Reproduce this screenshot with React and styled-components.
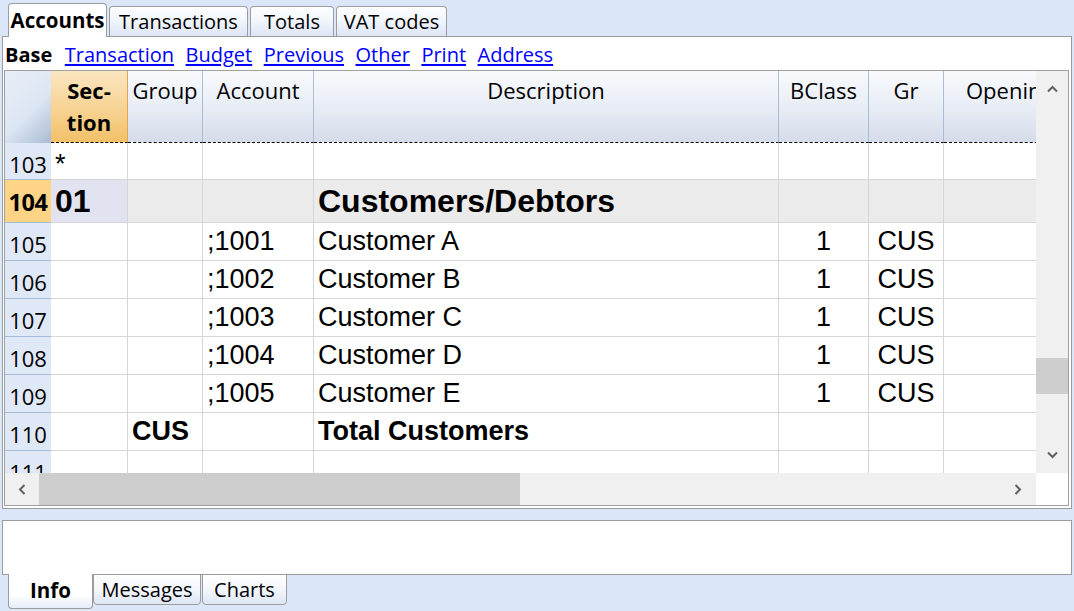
import React from 'react';
import styled, { createGlobalStyle, css } from 'styled-components';

const GlobalStyle = createGlobalStyle`
  html, body { margin: 0; padding: 0; background: #dbe6f8; }
  body { font-family: "Open Sans", "Noto Sans", sans-serif; width: 1074px; height: 611px; overflow: hidden; color: #000; }
  * { box-sizing: border-box; }
`;

const COLS = '46px 77px 75px 111px 465px 90px 75px 124px';
const BORDER = '#9c9c9c';

const Page = styled.div`
  display: flex;
  flex-direction: column;
  width: 1074px;
  height: 611px;
  background: #dbe6f8;
`;

const TopTabs = styled.div`
  display: flex;
  align-items: flex-end;
  gap: 2px;
  height: 36px;
  padding-left: 8px;
  position: relative;
  z-index: 2;
`;

const TopTab = styled.div`
  width: ${p => p.$w}px;
  height: ${p => (p.$active ? 34 : 30)}px;
  margin-bottom: ${p => (p.$active ? -1 : 0)}px;
  border: 1px solid ${BORDER};
  border-bottom: none;
  border-radius: 4px 4px 0 0;
  background: ${p => (p.$active ? '#ffffff' : 'linear-gradient(#fdfeff, #f2f6fc 45%, #dce5f5)')};
  font-size: ${p => (p.$active ? 20.5 : 20)}px;
  line-height: 27px;
  font-weight: ${p => (p.$active ? 700 : 400)};
  display: flex;
  align-items: flex-end;
  justify-content: center;
  padding-bottom: ${p => (p.$active ? 3 : 1)}px;
  white-space: nowrap;
`;

const Panel = styled.div`
  margin: 0 2px;
  height: 473px;
  border: 1px solid ${BORDER};
  background: #fff;
  display: flex;
  flex-direction: column;
  position: relative;
  z-index: 1;
`;

const SubTabs = styled.div`
  display: flex;
  gap: 11.5px;
  height: 33px;
  padding: 4px 0 0 2px;
  font-size: 20px;
  line-height: 27px;
`;

const SubTab = styled.span`
  ${p => p.$active
    ? css`font-weight: 700; color: #000; margin-right: 1px;`
    : css`color: #0000ff; text-decoration: underline; text-underline-offset: 2px;`}
`;

const GridFrame = styled.div`
  margin: 0 0 2px 1px;
  width: 1065px;
  border: 1px solid #a0a0a0;
  display: grid;
  grid-template-columns: 1031px 32px;
  grid-template-rows: 402px 32px;
`;

const Viewport = styled.div`
  overflow: hidden;
  display: flex;
  flex-direction: column;
`;

const HeaderRow = styled.div`
  display: grid;
  grid-template-columns: ${COLS};
  height: 72px;
  flex: none;
`;

const HeadCell = styled.div`
  border-right: 1px solid #a9bdd6;
  border-bottom: 1px dashed #000;
  background: linear-gradient(#f8fafd, #e8edf5 50%, #d5dce9);
  text-align: center;
  font-size: 22px;
  line-height: 32px;
  padding-top: 3px;
  white-space: nowrap;
  overflow: hidden;
  ${p => p.$section && css`
    background: linear-gradient(#fbe6c0, #f7d496 50%, #f2c168);
    border-right: 1px solid #e3a64e;
    font-weight: 700;
  `}
  ${p => p.$left && css`text-align: left; padding-left: 22px;`}
`;

const Corner = styled.div`
  background: linear-gradient(135deg, #e7eef8 0%, #dde6f3 55%, #a9bbd4 100%);
`;

const Row = styled.div`
  display: grid;
  grid-template-columns: ${COLS};
  height: ${p => p.$h}px;
  flex: none;
  background: ${p => (p.$band ? '#ebebeb' : '#fff')};
`;

const NumCell = styled.div`
  background: ${p => (p.$active ? '#fdd386' : '#dfe8f6')};
  border-bottom: 1px solid #a6bbd6;
  display: flex;
  align-items: center;
  justify-content: center;
  padding-top: ${p => (p.$active ? 1 : 5)}px;
  font-size: ${p => (p.$active ? 23.5 : 22)}px;
  font-weight: ${p => (p.$active ? 700 : 400)};
  letter-spacing: ${p => (p.$active ? '-0.5px' : '0')};
  overflow: hidden;
`;

const Cell = styled.div`
  border-right: 1px solid #d6d6d6;
  border-bottom: 1px solid #d6d6d6;
  display: flex;
  align-items: ${p => (p.$top ? 'flex-start' : 'center')};
  justify-content: ${p => (p.$center ? 'center' : 'flex-start')};
  padding: ${p => (p.$top ? '6px 4px 0' : '0 4px')};
  font-family: "Liberation Sans", Arial, sans-serif;
  font-size: ${p => (p.$big ? 32 : 27)}px;
  font-weight: ${p => (p.$bold ? 700 : 400)};
  white-space: nowrap;
  overflow: hidden;
  background: ${p => (p.$tint ? '#e1e4f0' : 'transparent')};
`;

const VScroll = styled.div`
  background: #f0f0f0;
  display: flex;
  flex-direction: column;
`;

const ScrollBtn = styled.div`
  flex: none;
  width: ${p => p.$w || 32}px;
  height: ${p => p.$h || 32}px;
  display: flex;
  align-items: center;
  justify-content: center;
`;

const VTrack = styled.div`
  flex: 1;
  padding-top: 251px;
`;

const VThumb = styled.div`
  height: 36px;
  background: #cdcdcd;
`;

const HScroll = styled.div`
  background: #f0f0f0;
  display: flex;
`;

const HThumb = styled.div`
  width: 481px;
  background: #cdcdcd;
`;

const HTrack = styled.div`
  flex: 1;
`;

const ScrollCorner = styled.div`
  background: #fff;
`;

const InfoPanel = styled.div`
  margin: 11px 2px 0;
  height: 55px;
  border: 1px solid ${BORDER};
  background: #fff;
`;

const BottomTabs = styled.div`
  display: flex;
  align-items: flex-start;
  padding-left: 8px;
  margin-top: -1px;
  position: relative;
  z-index: 2;
`;

const BottomTab = styled.div`
  width: ${p => p.$w}px;
  margin-left: ${p => p.$ml || 0}px;
  height: ${p => (p.$active ? 35 : 31)}px;
  border: 1px solid ${BORDER};
  border-top: ${p => (p.$active ? 'none' : `1px solid ${BORDER}`)};
  border-radius: 0 0 4px 4px;
  background: ${p => (p.$active ? 'linear-gradient(#ffffff, #ffffff 60%, #e6edf9)' : 'linear-gradient(#ffffff, #f3f6fc 50%, #dde6f5)')};
  font-size: ${p => (p.$active ? 20.5 : 20)}px;
  line-height: 27px;
  font-weight: ${p => (p.$active ? 700 : 400)};
  text-align: center;
  padding-top: ${p => (p.$active ? 3 : 1)}px;
`;

function Chevron({ dir }) {
  const pts = {
    up: '1,6.5 5.5,2 10,6.5',
    down: '1,1.5 5.5,6 10,1.5',
    left: '6.5,1 2,5.5 6.5,10',
    right: '1.5,1 6,5.5 1.5,10',
  }[dir];
  const vertical = dir === 'up' || dir === 'down';
  const w = vertical ? 11 : 8;
  const h = vertical ? 8 : 11;
  return (
    <svg width={w} height={h} viewBox={`0 0 ${w} ${h}`}>
      <polyline points={pts} fill="none" stroke="#606060" strokeWidth="2" />
    </svg>
  );
}

const topTabs = [
  { label: 'Accounts', w: 99, active: true },
  { label: 'Transactions', w: 139 },
  { label: 'Totals', w: 84 },
  { label: 'VAT codes', w: 111 },
];

const subTabs = ['Transaction', 'Budget', 'Previous', 'Other', 'Print', 'Address'];

const customers = [
  { n: 105, acc: ';1001', desc: 'Customer A' },
  { n: 106, acc: ';1002', desc: 'Customer B' },
  { n: 107, acc: ';1003', desc: 'Customer C' },
  { n: 108, acc: ';1004', desc: 'Customer D' },
  { n: 109, acc: ';1005', desc: 'Customer E' },
];

export default function App() {
  return (
    <Page>
      <GlobalStyle />
      <TopTabs>
        {topTabs.map(t => (
          <TopTab key={t.label} $w={t.w} $active={t.active}>{t.label}</TopTab>
        ))}
      </TopTabs>
      <Panel>
        <SubTabs>
          <SubTab $active>Base</SubTab>
          {subTabs.map(s => <SubTab key={s}>{s}</SubTab>)}
        </SubTabs>
        <GridFrame>
          <Viewport>
            <HeaderRow>
              <Corner />
              <HeadCell $section>Sec-<br />tion</HeadCell>
              <HeadCell>Group</HeadCell>
              <HeadCell>Account</HeadCell>
              <HeadCell>Description</HeadCell>
              <HeadCell>BClass</HeadCell>
              <HeadCell>Gr</HeadCell>
              <HeadCell $left>Opening</HeadCell>
            </HeaderRow>
            <Row $h={37}>
              <NumCell>103</NumCell>
              <Cell $top>*</Cell>
              <Cell /><Cell /><Cell /><Cell /><Cell /><Cell />
            </Row>
            <Row $h={43} $band>
              <NumCell $active>104</NumCell>
              <Cell $tint $big $bold>01</Cell>
              <Cell /><Cell />
              <Cell $big $bold>Customers/Debtors</Cell>
              <Cell /><Cell /><Cell />
            </Row>
            {customers.map(c => (
              <Row key={c.n} $h={38}>
                <NumCell>{c.n}</NumCell>
                <Cell /><Cell />
                <Cell>{c.acc}</Cell>
                <Cell>{c.desc}</Cell>
                <Cell $center>1</Cell>
                <Cell $center>CUS</Cell>
                <Cell />
              </Row>
            ))}
            <Row $h={38}>
              <NumCell>110</NumCell>
              <Cell />
              <Cell $bold>CUS</Cell>
              <Cell />
              <Cell $bold>Total Customers</Cell>
              <Cell /><Cell /><Cell />
            </Row>
            <Row $h={38}>
              <NumCell>111</NumCell>
              <Cell /><Cell /><Cell /><Cell /><Cell /><Cell /><Cell />
            </Row>
          </Viewport>
          <VScroll>
            <ScrollBtn $h={36}><Chevron dir="up" /></ScrollBtn>
            <VTrack><VThumb /></VTrack>
            <ScrollBtn $h={36}><Chevron dir="down" /></ScrollBtn>
          </VScroll>
          <HScroll>
            <ScrollBtn $w={34}><Chevron dir="left" /></ScrollBtn>
            <HThumb />
            <HTrack />
            <ScrollBtn $w={36}><Chevron dir="right" /></ScrollBtn>
          </HScroll>
          <ScrollCorner />
        </GridFrame>
      </Panel>
      <InfoPanel />
      <BottomTabs>
        <BottomTab $w={85} $active>Info</BottomTab>
        <BottomTab $w={108}>Messages</BottomTab>
        <BottomTab $w={85} $ml={1}>Charts</BottomTab>
      </BottomTabs>
    </Page>
  );
}
